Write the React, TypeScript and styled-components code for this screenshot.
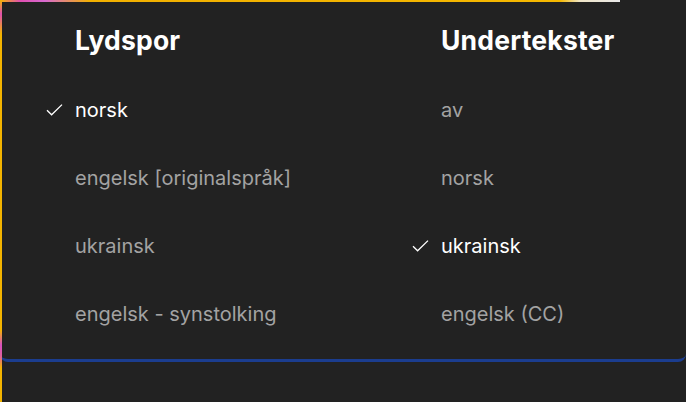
import React from "react";
import styled, { createGlobalStyle } from "styled-components";

const Global = createGlobalStyle`
  html, body { margin: 0; padding: 0; background: #222222; }
  body { font-family: Inter, "Noto Sans", Roboto, sans-serif; -webkit-font-smoothing: antialiased; }
`;

const Page = styled.div`
  position: relative;
  width: 686px;
  height: 402px;
  overflow: hidden;
  background: #222222;
`;

const TopGlow = styled.div`
  position: absolute;
  top: 0;
  left: 0;
  width: 620px;
  height: 2px;
  background: linear-gradient(
    90deg,
    #f4b400 0px,
    #e04fb0 20px,
    #d86ad0 45px,
    #f2b000 90px,
    #f5b800 560px,
    #f0e6c8 580px,
    #e8e8e8 620px
  );
`;

const LeftGlow = styled.div`
  position: absolute;
  top: 0;
  left: 0;
  width: 2px;
  height: 402px;
  background: linear-gradient(
    180deg,
    #f4b400 0px,
    #e04fb0 14px,
    #f4b400 34px,
    #f4b400 330px,
    #d84fc0 345px,
    #e060a0 356px,
    #f4b400 368px,
    #f4b400 402px
  );
`;

const Panel = styled.div`
  box-sizing: border-box;
  width: 686px;
  height: 362px;
  border-bottom: 3px solid #1b3d8f;
  border-radius: 0 0 8px 8px;
  padding: 22px 0 0 46px;
  display: grid;
  grid-template-columns: 366px 1fr;
`;

const Column = styled.div`
  display: flex;
  flex-direction: column;
`;

const Heading = styled.h2`
  margin: 0 0 0 29px;
  height: 36px;
  line-height: 36px;
  font-size: 26.5px;
  font-weight: 700;
  color: #ffffff;
  letter-spacing: 0.2px;
`;

const Row = styled.div<{ $selected?: boolean }>`
  display: flex;
  align-items: center;
  height: 68px;
  font-size: 20px;
  color: ${(p) => (p.$selected ? "#ffffff" : "#a3a3a3")};
`;

const FirstSpacer = styled.div`
  height: 18px;
`;

const CheckSlot = styled.span`
  width: 29px;
  display: flex;
  align-items: center;
`;

const Check = () => (
  <svg width="17" height="12" viewBox="0 0 17 12" fill="none">
    <path d="M1 6.2 L5.6 10.8 L16 0.6" stroke="#ffffff" strokeWidth="1.3" />
  </svg>
);

type Item = { label: string; selected?: boolean };

const audio: Item[] = [
  { label: "norsk", selected: true },
  { label: "engelsk [originalspråk]" },
  { label: "ukrainsk" },
  { label: "engelsk - synstolking" },
];

const subs: Item[] = [
  { label: "av" },
  { label: "norsk" },
  { label: "ukrainsk", selected: true },
  { label: "engelsk (CC)" },
];

const List = ({ title, items }: { title: string; items: Item[] }) => (
  <Column>
    <Heading>{title}</Heading>
    <FirstSpacer />
    {items.map((it) => (
      <Row key={it.label} $selected={it.selected}>
        <CheckSlot>{it.selected && <Check />}</CheckSlot>
        {it.label}
      </Row>
    ))}
  </Column>
);

export default function App() {
  return (
    <>
      <Global />
      <Page>
        <Panel>
          <List title="Lydspor" items={audio} />
          <List title="Undertekster" items={subs} />
        </Panel>
        <TopGlow />
        <LeftGlow />
      </Page>
    </>
  );
}
